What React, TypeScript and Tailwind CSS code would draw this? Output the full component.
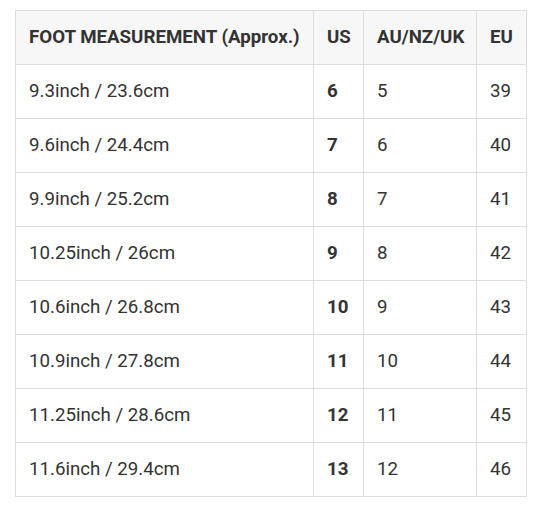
const rows = [
  ['9.3inch / 23.6cm', '6', '5', '39'],
  ['9.6inch / 24.4cm', '7', '6', '40'],
  ['9.9inch / 25.2cm', '8', '7', '41'],
  ['10.25inch / 26cm', '9', '8', '42'],
  ['10.6inch / 26.8cm', '10', '9', '43'],
  ['10.9inch / 27.8cm', '11', '10', '44'],
  ['11.25inch / 28.6cm', '12', '11', '45'],
  ['11.6inch / 29.4cm', '13', '12', '46'],
];

export default function App() {
  return (
    <div className="min-h-screen bg-white pl-[15px] pt-[10px] font-['Roboto',sans-serif] text-[18.7px] text-[#333]">
      <table className="w-[511px] table-fixed border-collapse whitespace-nowrap border border-[#ddd]">
        <thead>
          <tr className="h-[54px] bg-[#f7f7f7]">
            <th className="w-[298px] border border-[#ddd] px-[13px] text-left font-bold">FOOT MEASUREMENT (Approx.)</th>
            <th className="w-[50px] border border-[#ddd] px-[13px] text-left font-bold">US</th>
            <th className="w-[113px] border border-[#ddd] px-[13px] text-left font-bold">AU/NZ/UK</th>
            <th className="w-[50px] border border-[#ddd] px-[13px] text-left font-bold">EU</th>
          </tr>
        </thead>
        <tbody>
          {rows.map(r => (
            <tr key={r[0]} className="h-[54px]">
              <td className="border border-[#ddd] px-[13px]">{r[0]}</td>
              <td className="border border-[#ddd] px-[13px] font-bold">{r[1]}</td>
              <td className="border border-[#ddd] px-[13px]">{r[2]}</td>
              <td className="border border-[#ddd] px-[13px]">{r[3]}</td>
            </tr>
          ))}
        </tbody>
      </table>
    </div>
  );
}
